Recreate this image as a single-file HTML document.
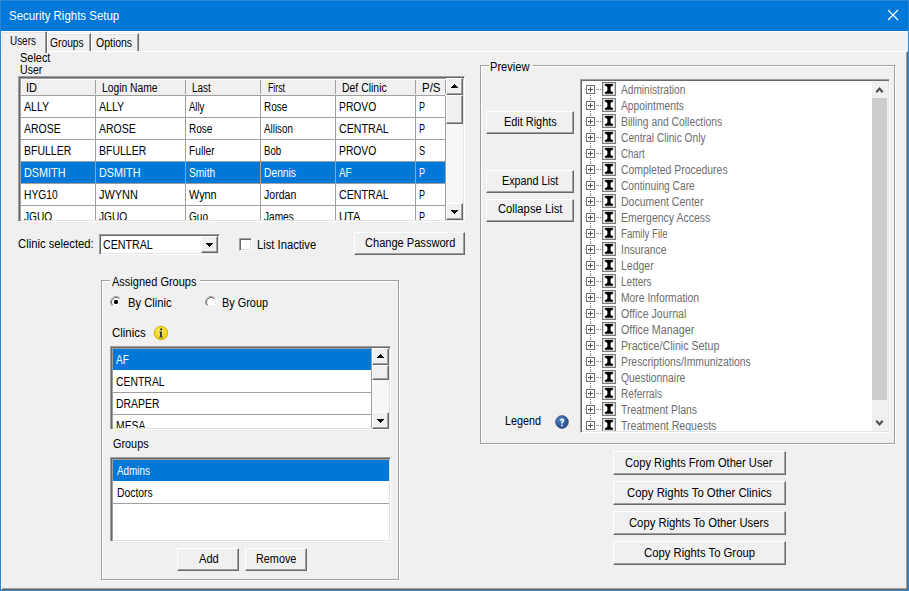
<!DOCTYPE html>
<html><head><meta charset="utf-8">
<style>
*{margin:0;padding:0;box-sizing:border-box}
html,body{width:909px;height:591px;overflow:hidden;background:#f0f0f0;position:relative;font-family:"Liberation Sans",sans-serif}
.a{position:absolute}
.t{position:absolute;font-size:12px;line-height:12px;height:16px;white-space:nowrap;color:#000;transform-origin:0 0}
</style></head><body>
<div class="a" style="left:0px;top:0px;width:909px;height:31px;background:#0078d7;"></div>
<div class="a" style="left:0px;top:0px;width:909px;height:1px;background:#2b87d3;"></div>
<div class="a" style="left:0px;top:0px;width:1px;height:591px;background:#2b87d3;"></div>
<div class="a" style="left:908px;top:0px;width:1px;height:591px;background:#2b87d3;"></div>
<div class="a" style="left:0px;top:590px;width:909px;height:1px;background:#2b87d3;"></div>
<div class="t" style="left:9.20px;top:10px;transform:scaleX(0.9549);color:#fff">Security Rights Setup</div>
<svg class="a" style="left:887px;top:9px" width="12" height="12" viewBox="0 0 12 12" ><path d="M1 1L11 11M11 1L1 11" stroke="#fff" stroke-width="1.2"/></svg>
<div class="a" style="left:1px;top:31px;width:907px;height:1px;background:#fff;"></div>
<div class="a" style="left:1px;top:51px;width:907px;height:539px;border-top:1px solid #fff;border-left:1px solid #fff;border-right:1px solid #696969;border-bottom:1px solid #696969;box-shadow:inset -1px -1px 0 #a0a0a0"></div>
<div class="a" style="left:47px;top:33px;width:44px;height:18px;border-top:1px solid #fff;border-left:1px solid #fff;border-right:1px solid #696969;box-shadow:inset -1px 0 0 #a0a0a0,inset 0 1px 0 #e3e3e3"></div>
<div class="a" style="left:91px;top:33px;width:48px;height:18px;border-top:1px solid #fff;border-left:1px solid #fff;border-right:1px solid #696969;box-shadow:inset -1px 0 0 #a0a0a0,inset 0 1px 0 #e3e3e3"></div>
<div class="a" style="left:1px;top:31px;width:46px;height:22px;background:#f0f0f0;border-top:1px solid #fff;border-left:1px solid #fff;border-right:1px solid #696969;box-shadow:inset -1px 0 0 #a0a0a0,inset 1px 1px 0 #e3e3e3"></div>
<div class="t" style="left:9.50px;top:35px;transform:scaleX(0.8265)">Users</div>
<div class="t" style="left:50.30px;top:37px;transform:scaleX(0.8564)">Groups</div>
<div class="t" style="left:96.30px;top:37px;transform:scaleX(0.8729)">Options</div>
<div class="t" style="left:20.00px;top:52px;transform:scaleX(0.9113)">Select</div>
<div class="t" style="left:20.00px;top:64px;transform:scaleX(0.8800)">User</div>
<div class="a" style="left:18px;top:76px;width:447px;height:146px;background:#fff;border-top:1px solid #a0a0a0;border-left:1px solid #a0a0a0;border-right:1px solid #fff;border-bottom:1px solid #fff;box-shadow:inset 1px 1px 0 #696969,inset 2px 2px 0 #a0a0a0,inset -1px -1px 0 #e3e3e3"></div>
<div class="a" style="left:21px;top:79px;width:424px;height:16px;background:#f0f0f0;"></div>
<div class="a" style="left:21px;top:79px;width:424px;height:1px;background:#fff;"></div>
<div class="a" style="left:21px;top:79px;width:1px;height:16px;background:#fff;"></div>
<div class="a" style="left:21px;top:95px;width:424px;height:1px;background:#a0a0a0;"></div>
<div class="a" style="left:95px;top:80px;width:1px;height:14px;background:#a0a0a0;"></div>
<div class="a" style="left:185px;top:80px;width:1px;height:14px;background:#a0a0a0;"></div>
<div class="a" style="left:260px;top:80px;width:1px;height:14px;background:#a0a0a0;"></div>
<div class="a" style="left:335px;top:80px;width:1px;height:14px;background:#a0a0a0;"></div>
<div class="a" style="left:415px;top:80px;width:1px;height:14px;background:#a0a0a0;"></div>
<div class="a" style="left:445px;top:80px;width:1px;height:14px;background:#a0a0a0;"></div>
<div class="t" style="left:26.18px;top:82px;transform:scaleX(0.9176)">ID</div>
<div class="t" style="left:102.20px;top:82px;transform:scaleX(0.8580)">Login Name</div>
<div class="t" style="left:191.80px;top:82px;transform:scaleX(0.8309)">Last</div>
<div class="t" style="left:267.60px;top:82px;transform:scaleX(0.7294)">First</div>
<div class="t" style="left:342.10px;top:82px;transform:scaleX(0.8706)">Def Clinic</div>
<div class="t" style="left:422.20px;top:82px;transform:scaleX(0.9567)">P/S</div>
<div class="a" style="left:21px;top:162px;width:424px;height:21px;background:#0078d7;"></div>
<div class="a" style="left:21px;top:117px;width:424px;height:1px;background:#a0a0a0;"></div>
<div class="a" style="left:21px;top:139px;width:424px;height:1px;background:#a0a0a0;"></div>
<div class="a" style="left:21px;top:161px;width:424px;height:1px;background:#a0a0a0;"></div>
<div class="a" style="left:21px;top:183px;width:424px;height:1px;background:#a0a0a0;"></div>
<div class="a" style="left:21px;top:205px;width:424px;height:1px;background:#a0a0a0;"></div>
<div class="a" style="left:95px;top:96px;width:1px;height:124px;background:#a0a0a0;"></div>
<div class="a" style="left:185px;top:96px;width:1px;height:124px;background:#a0a0a0;"></div>
<div class="a" style="left:260px;top:96px;width:1px;height:124px;background:#a0a0a0;"></div>
<div class="a" style="left:335px;top:96px;width:1px;height:124px;background:#a0a0a0;"></div>
<div class="a" style="left:415px;top:96px;width:1px;height:124px;background:#a0a0a0;"></div>
<div class="a" style="left:445px;top:96px;width:1px;height:124px;background:#a0a0a0;"></div>
<div class="t" style="left:24.30px;top:101px;transform:scaleX(0.8854)">ALLY</div>
<div class="t" style="left:99.20px;top:101px;transform:scaleX(0.8854)">ALLY</div>
<div class="t" style="left:188.70px;top:101px;transform:scaleX(0.7964)">Ally</div>
<div class="t" style="left:264.30px;top:101px;transform:scaleX(0.8363)">Rose</div>
<div class="t" style="left:339.00px;top:101px;transform:scaleX(0.8603)">PROVO</div>
<div class="t" style="left:419.30px;top:101px;transform:scaleX(0.7500)">P</div>
<div class="t" style="left:24.30px;top:123px;transform:scaleX(0.8713)">AROSE</div>
<div class="t" style="left:99.20px;top:123px;transform:scaleX(0.8713)">AROSE</div>
<div class="t" style="left:188.70px;top:123px;transform:scaleX(0.8363)">Rose</div>
<div class="t" style="left:264.30px;top:123px;transform:scaleX(0.8161)">Allison</div>
<div class="t" style="left:339.00px;top:123px;transform:scaleX(0.8875)">CENTRAL</div>
<div class="t" style="left:419.30px;top:123px;transform:scaleX(0.7500)">P</div>
<div class="t" style="left:24.30px;top:145px;transform:scaleX(0.8739)">BFULLER</div>
<div class="t" style="left:99.20px;top:145px;transform:scaleX(0.8739)">BFULLER</div>
<div class="t" style="left:188.70px;top:145px;transform:scaleX(0.8531)">Fuller</div>
<div class="t" style="left:264.30px;top:145px;transform:scaleX(0.8073)">Bob</div>
<div class="t" style="left:339.00px;top:145px;transform:scaleX(0.8603)">PROVO</div>
<div class="t" style="left:419.30px;top:145px;transform:scaleX(0.7625)">S</div>
<div class="t" style="left:24.30px;top:167px;transform:scaleX(0.9023);color:#fff">DSMITH</div>
<div class="t" style="left:99.20px;top:167px;transform:scaleX(0.9023);color:#fff">DSMITH</div>
<div class="t" style="left:188.70px;top:167px;transform:scaleX(0.8533);color:#fff">Smith</div>
<div class="t" style="left:264.30px;top:167px;transform:scaleX(0.8567);color:#fff">Dennis</div>
<div class="t" style="left:339.00px;top:167px;transform:scaleX(0.8265);color:#fff">AF</div>
<div class="t" style="left:419.30px;top:167px;transform:scaleX(0.7500);color:#fff">P</div>
<div class="t" style="left:24.30px;top:189px;transform:scaleX(0.8569)">HYG10</div>
<div class="t" style="left:99.20px;top:189px;transform:scaleX(0.9096)">JWYNN</div>
<div class="t" style="left:188.70px;top:189px;transform:scaleX(0.9032)">Wynn</div>
<div class="t" style="left:264.30px;top:189px;transform:scaleX(0.8801)">Jordan</div>
<div class="t" style="left:339.00px;top:189px;transform:scaleX(0.8875)">CENTRAL</div>
<div class="t" style="left:419.30px;top:189px;transform:scaleX(0.7500)">P</div>
<div class="t" style="left:24.30px;top:211px;transform:scaleX(0.8485);clip-path:inset(-4px -4px 7px -4px)">JGUO</div>
<div class="t" style="left:99.20px;top:211px;transform:scaleX(0.8485);clip-path:inset(-4px -4px 7px -4px)">JGUO</div>
<div class="t" style="left:188.70px;top:211px;transform:scaleX(0.8388);clip-path:inset(-4px -4px 7px -4px)">Guo</div>
<div class="t" style="left:264.30px;top:211px;transform:scaleX(0.8431);clip-path:inset(-4px -4px 7px -4px)">James</div>
<div class="t" style="left:339.00px;top:211px;transform:scaleX(0.9348);clip-path:inset(-4px -4px 7px -4px)">UTA</div>
<div class="t" style="left:419.30px;top:211px;transform:scaleX(0.7500);clip-path:inset(-4px -4px 7px -4px)">P</div>
<div class="a" style="left:446px;top:78px;width:17px;height:142px;background-color:#f0f0f0;background-image:linear-gradient(45deg,#fff 25%,transparent 25%,transparent 75%,#fff 75%),linear-gradient(45deg,#fff 25%,transparent 25%,transparent 75%,#fff 75%);background-size:2px 2px;background-position:0 0,1px 1px"></div>
<div class="a" style="left:446px;top:78px;width:17px;height:17px;background:#f0f0f0;border-top:1px solid #fff;border-left:1px solid #fff;border-right:1px solid #696969;border-bottom:1px solid #696969;box-shadow:inset -1px -1px 0 #a0a0a0"></div>
<svg class="a" style="left:451px;top:84px" width="7" height="4" viewBox="0 0 7 4" shape-rendering="crispEdges"><path d="M3 0h1v1h1v1h1v1h1v1h-7v-1h1v-1h1v-1h1z" fill="#000"/></svg>
<div class="a" style="left:446px;top:95px;width:17px;height:29px;background:#f0f0f0;border-top:1px solid #fff;border-left:1px solid #fff;border-right:1px solid #696969;border-bottom:1px solid #696969;box-shadow:inset -1px -1px 0 #a0a0a0"></div>
<div class="a" style="left:446px;top:203px;width:17px;height:17px;background:#f0f0f0;border-top:1px solid #fff;border-left:1px solid #fff;border-right:1px solid #696969;border-bottom:1px solid #696969;box-shadow:inset -1px -1px 0 #a0a0a0"></div>
<svg class="a" style="left:451px;top:210px" width="7" height="4" viewBox="0 0 7 4" shape-rendering="crispEdges"><path d="M0 0h7v1h-1v1h-1v1h-1v1h-1v-1h-1v-1h-1v-1h-1z" fill="#000"/></svg>
<div class="t" style="left:17.60px;top:238px;transform:scaleX(0.9382)">Clinic selected:</div>
<div class="a" style="left:99px;top:234px;width:121px;height:21px;background:#fff;border-top:1px solid #a0a0a0;border-left:1px solid #a0a0a0;border-right:1px solid #fff;border-bottom:1px solid #fff;box-shadow:inset 1px 1px 0 #696969,inset -1px -1px 0 #e3e3e3"></div>
<div class="t" style="left:102.60px;top:239px;transform:scaleX(0.8893)">CENTRAL</div>
<div class="a" style="left:201px;top:236px;width:17px;height:17px;background:#f0f0f0;border-top:1px solid #fff;border-left:1px solid #fff;border-right:1px solid #696969;border-bottom:1px solid #696969;box-shadow:inset -1px -1px 0 #a0a0a0"></div>
<svg class="a" style="left:206px;top:243px" width="7" height="4" viewBox="0 0 7 4" shape-rendering="crispEdges"><path d="M0 0h7v1h-1v1h-1v1h-1v1h-1v-1h-1v-1h-1v-1h-1z" fill="#000"/></svg>
<div class="a" style="left:239px;top:238px;width:13px;height:13px;background:#fff;border-top:1px solid #a0a0a0;border-left:1px solid #a0a0a0;border-right:1px solid #fff;border-bottom:1px solid #fff;box-shadow:inset 1px 1px 0 #696969,inset -1px -1px 0 #e3e3e3"></div>
<div class="t" style="left:257.40px;top:239px;transform:scaleX(0.9342)">List Inactive</div>
<div class="a" style="left:354px;top:232px;width:111px;height:23px;background:#f0f0f0;border-top:1px solid #fff;border-left:1px solid #fff;border-right:1px solid #696969;border-bottom:1px solid #696969;box-shadow:inset -1px -1px 0 #a0a0a0"></div>
<div class="t" style="left:365.20px;top:237px;transform:scaleX(0.9221)">Change Password</div>
<div class="a" style="left:102px;top:281px;width:298px;height:300px;border:1px solid #fff"></div>
<div class="a" style="left:101px;top:280px;width:298px;height:300px;border:1px solid #a0a0a0"></div>
<div class="a" style="left:110px;top:272px;width:90px;height:14px;background:#f0f0f0;"></div>
<div class="t" style="left:111.50px;top:276px;transform:scaleX(0.9180)">Assigned Groups</div>
<svg class="a" style="left:110px;top:296px" width="12" height="12" viewBox="0 0 12 12" ><circle cx="6" cy="6" r="5.5" fill="#fff"/><path d="M2.11 9.89A5.5 5.5 0 0 1 9.89 2.11" stroke="#a0a0a0" stroke-width="1" fill="none"/><path d="M2.82 9.18A4.5 4.5 0 0 1 9.18 2.82" stroke="#696969" stroke-width="1" fill="none"/><path d="M9.18 2.82A4.5 4.5 0 0 1 2.82 9.18" stroke="#e3e3e3" stroke-width="1" fill="none"/><rect x="4" y="4" width="4" height="4" rx="1.4" fill="#000"/></svg>
<div class="t" style="left:127.70px;top:297px;transform:scaleX(0.9341)">By Clinic</div>
<svg class="a" style="left:205px;top:296px" width="12" height="12" viewBox="0 0 12 12" ><circle cx="6" cy="6" r="5.5" fill="#fff"/><path d="M2.11 9.89A5.5 5.5 0 0 1 9.89 2.11" stroke="#a0a0a0" stroke-width="1" fill="none"/><path d="M2.82 9.18A4.5 4.5 0 0 1 9.18 2.82" stroke="#696969" stroke-width="1" fill="none"/><path d="M9.18 2.82A4.5 4.5 0 0 1 2.82 9.18" stroke="#e3e3e3" stroke-width="1" fill="none"/></svg>
<div class="t" style="left:222.40px;top:297px;transform:scaleX(0.9076)">By Group</div>
<div class="t" style="left:112.30px;top:327px;transform:scaleX(0.9537)">Clinics</div>
<svg class="a" style="left:153px;top:325px" width="16" height="16" viewBox="0 0 16 16" ><defs><radialGradient id="yg" cx="0.4" cy="0.35" r="0.7"><stop offset="0" stop-color="#fbe866"/><stop offset="1" stop-color="#f0d000"/></radialGradient></defs><circle cx="8" cy="8" r="6.7" fill="url(#yg)" stroke="#caa800" stroke-width="0.9"/><circle cx="8.2" cy="4.4" r="1.15" fill="#34344a"/><path d="M6.3 6.4H8.9V11.7H10V12.6H5.9V11.7H7V7.2H6.3Z" fill="#34344a"/></svg>
<div class="a" style="left:110px;top:346px;width:281px;height:84px;background:#fff;border-top:1px solid #a0a0a0;border-left:1px solid #a0a0a0;border-right:1px solid #fff;border-bottom:1px solid #fff;box-shadow:inset 1px 1px 0 #696969,inset 2px 2px 0 #a0a0a0,inset -1px -1px 0 #e3e3e3"></div>
<div class="a" style="left:113px;top:349px;width:258px;height:21px;background:#0078d7;"></div>
<div class="a" style="left:113px;top:392px;width:258px;height:1px;background:#a0a0a0;"></div>
<div class="a" style="left:113px;top:414px;width:258px;height:1px;background:#a0a0a0;"></div>
<div class="a" style="left:371px;top:349px;width:1px;height:79px;background:#a0a0a0;"></div>
<div class="t" style="left:116.30px;top:354px;transform:scaleX(0.8398);color:#fff">AF</div>
<div class="t" style="left:115.90px;top:376px;transform:scaleX(0.8680)">CENTRAL</div>
<div class="t" style="left:116.30px;top:398px;transform:scaleX(0.8680)">DRAPER</div>
<div class="t" style="left:116.30px;top:420px;transform:scaleX(0.8646);clip-path:inset(-4px -4px 8px -4px)">MESA</div>
<div class="a" style="left:372px;top:348px;width:17px;height:80px;background-color:#f0f0f0;background-image:linear-gradient(45deg,#fff 25%,transparent 25%,transparent 75%,#fff 75%),linear-gradient(45deg,#fff 25%,transparent 25%,transparent 75%,#fff 75%);background-size:2px 2px;background-position:0 0,1px 1px"></div>
<div class="a" style="left:372px;top:348px;width:17px;height:17px;background:#f0f0f0;border-top:1px solid #fff;border-left:1px solid #fff;border-right:1px solid #696969;border-bottom:1px solid #696969;box-shadow:inset -1px -1px 0 #a0a0a0"></div>
<svg class="a" style="left:377px;top:354px" width="7" height="4" viewBox="0 0 7 4" shape-rendering="crispEdges"><path d="M3 0h1v1h1v1h1v1h1v1h-7v-1h1v-1h1v-1h1z" fill="#000"/></svg>
<div class="a" style="left:372px;top:365px;width:17px;height:15px;background:#f0f0f0;border-top:1px solid #fff;border-left:1px solid #fff;border-right:1px solid #696969;border-bottom:1px solid #696969;box-shadow:inset -1px -1px 0 #a0a0a0"></div>
<div class="a" style="left:372px;top:412px;width:17px;height:17px;background:#f0f0f0;border-top:1px solid #fff;border-left:1px solid #fff;border-right:1px solid #696969;border-bottom:1px solid #696969;box-shadow:inset -1px -1px 0 #a0a0a0"></div>
<svg class="a" style="left:377px;top:419px" width="7" height="4" viewBox="0 0 7 4" shape-rendering="crispEdges"><path d="M0 0h7v1h-1v1h-1v1h-1v1h-1v-1h-1v-1h-1v-1h-1z" fill="#000"/></svg>
<div class="t" style="left:112.60px;top:438px;transform:scaleX(0.9047)">Groups</div>
<div class="a" style="left:110px;top:457px;width:281px;height:85px;background:#fff;border-top:1px solid #a0a0a0;border-left:1px solid #a0a0a0;border-right:1px solid #fff;border-bottom:1px solid #fff;box-shadow:inset 1px 1px 0 #696969,inset 2px 2px 0 #a0a0a0,inset -1px -1px 0 #e3e3e3"></div>
<div class="a" style="left:113px;top:460px;width:276px;height:21px;background:#0078d7;"></div>
<div class="a" style="left:113px;top:503px;width:276px;height:1px;background:#a0a0a0;"></div>
<div class="t" style="left:116.60px;top:465px;transform:scaleX(0.8247);color:#fff">Admins</div>
<div class="t" style="left:116.60px;top:487px;transform:scaleX(0.8611)">Doctors</div>
<div class="a" style="left:177px;top:548px;width:62px;height:23px;background:#f0f0f0;border-top:1px solid #fff;border-left:1px solid #fff;border-right:1px solid #696969;border-bottom:1px solid #696969;box-shadow:inset -1px -1px 0 #a0a0a0"></div>
<div class="t" style="left:199.00px;top:553px;transform:scaleX(0.9237)">Add</div>
<div class="a" style="left:245px;top:548px;width:62px;height:23px;background:#f0f0f0;border-top:1px solid #fff;border-left:1px solid #fff;border-right:1px solid #696969;border-bottom:1px solid #696969;box-shadow:inset -1px -1px 0 #a0a0a0"></div>
<div class="t" style="left:256.40px;top:553px;transform:scaleX(0.9042)">Remove</div>
<div class="a" style="left:481px;top:66px;width:415px;height:379px;border:1px solid #fff"></div>
<div class="a" style="left:480px;top:65px;width:415px;height:379px;border:1px solid #a0a0a0"></div>
<div class="a" style="left:489px;top:58px;width:44px;height:14px;background:#f0f0f0;"></div>
<div class="t" style="left:490.20px;top:61px;transform:scaleX(0.9230)">Preview</div>
<div class="a" style="left:486px;top:111px;width:88px;height:23px;background:#f0f0f0;border-top:1px solid #fff;border-left:1px solid #fff;border-right:1px solid #696969;border-bottom:1px solid #696969;box-shadow:inset -1px -1px 0 #a0a0a0"></div>
<div class="t" style="left:503.60px;top:116px;transform:scaleX(0.9082)">Edit Rights</div>
<div class="a" style="left:486px;top:170px;width:88px;height:23px;background:#f0f0f0;border-top:1px solid #fff;border-left:1px solid #fff;border-right:1px solid #696969;border-bottom:1px solid #696969;box-shadow:inset -1px -1px 0 #a0a0a0"></div>
<div class="t" style="left:502.00px;top:175px;transform:scaleX(0.8979)">Expand List</div>
<div class="a" style="left:486px;top:199px;width:88px;height:23px;background:#f0f0f0;border-top:1px solid #fff;border-left:1px solid #fff;border-right:1px solid #696969;border-bottom:1px solid #696969;box-shadow:inset -1px -1px 0 #a0a0a0"></div>
<div class="t" style="left:498.40px;top:203px;transform:scaleX(0.9370)">Collapse List</div>
<div class="t" style="left:504.50px;top:415px;transform:scaleX(0.9017)">Legend</div>
<svg class="a" style="left:555px;top:415px" width="14" height="14" viewBox="0 0 14 14" ><defs><radialGradient id="bg1" cx="0.38" cy="0.32" r="0.75"><stop offset="0" stop-color="#5b86c8"/><stop offset="0.6" stop-color="#2f5ca6"/><stop offset="1" stop-color="#21468a"/></radialGradient></defs><circle cx="7" cy="7" r="6.4" fill="url(#bg1)" stroke="#3b4660" stroke-width="0.6"/><path d="M4.9 5.6Q4.9 3.6 7.1 3.6Q9.4 3.6 9.4 5.4Q9.4 6.4 8.3 7Q7.9 7.3 7.9 7.9V8.6H6.2V7.7Q6.2 6.7 7.2 6.1Q7.7 5.8 7.7 5.4Q7.7 4.9 7.1 4.9Q6.5 4.9 6.5 5.8Z" fill="#fff"/><rect x="6.2" y="9.7" width="1.7" height="1.5" fill="#fff"/></svg>
<div class="a" style="left:580px;top:79px;width:310px;height:354px;background:#fff;border-top:1px solid #a0a0a0;border-left:1px solid #a0a0a0;border-right:1px solid #fff;border-bottom:1px solid #fff;box-shadow:inset 1px 1px 0 #696969,inset -1px -1px 0 #e3e3e3"></div>
<div class="a" style="left:872px;top:81px;width:16px;height:350px;background:#f0f0f0;"></div>
<div class="a" style="left:872px;top:98px;width:15px;height:302px;background:#cdcdcd;"></div>
<svg class="a" style="left:875px;top:86px" width="10" height="8" viewBox="0 0 10 8" ><path d="M1.3 6.3L4.5 2.6L7.7 6.3" stroke="#505050" stroke-width="2.2" fill="none"/></svg>
<svg class="a" style="left:875px;top:419px" width="10" height="8" viewBox="0 0 10 8" ><path d="M1.3 1.7L4.5 5.4L7.7 1.7" stroke="#505050" stroke-width="2.2" fill="none"/></svg>
<svg class="a" style="left:582px;top:82px" width="290" height="349" viewBox="0 0 290 349" shape-rendering="crispEdges"><rect x="4.5" y="3.5" width="8" height="8" fill="#fff" stroke="#707070"/><rect x="6" y="7" width="5" height="1" fill="#505050"/><rect x="8" y="5" width="1" height="5" fill="#505050"/><rect x="14" y="7" width="1" height="1" fill="#808080"/><rect x="16" y="7" width="1" height="1" fill="#808080"/><rect x="18" y="7" width="1" height="1" fill="#808080"/><rect x="8" y="13" width="1" height="1" fill="#808080"/><rect x="8" y="15" width="1" height="1" fill="#808080"/><rect x="8" y="17" width="1" height="1" fill="#808080"/><rect x="20.5" y="0.5" width="13" height="13" fill="#fff" stroke="#7a7a7a"/><rect x="21.5" y="1.5" width="11" height="11" fill="none" stroke="#d8d8d8"/><rect x="4.5" y="19.5" width="8" height="8" fill="#fff" stroke="#707070"/><rect x="6" y="23" width="5" height="1" fill="#505050"/><rect x="8" y="21" width="1" height="5" fill="#505050"/><rect x="14" y="23" width="1" height="1" fill="#808080"/><rect x="16" y="23" width="1" height="1" fill="#808080"/><rect x="18" y="23" width="1" height="1" fill="#808080"/><rect x="8" y="29" width="1" height="1" fill="#808080"/><rect x="8" y="31" width="1" height="1" fill="#808080"/><rect x="8" y="33" width="1" height="1" fill="#808080"/><rect x="20.5" y="16.5" width="13" height="13" fill="#fff" stroke="#7a7a7a"/><rect x="21.5" y="17.5" width="11" height="11" fill="none" stroke="#d8d8d8"/><rect x="4.5" y="35.5" width="8" height="8" fill="#fff" stroke="#707070"/><rect x="6" y="39" width="5" height="1" fill="#505050"/><rect x="8" y="37" width="1" height="5" fill="#505050"/><rect x="14" y="39" width="1" height="1" fill="#808080"/><rect x="16" y="39" width="1" height="1" fill="#808080"/><rect x="18" y="39" width="1" height="1" fill="#808080"/><rect x="8" y="45" width="1" height="1" fill="#808080"/><rect x="8" y="47" width="1" height="1" fill="#808080"/><rect x="8" y="49" width="1" height="1" fill="#808080"/><rect x="20.5" y="32.5" width="13" height="13" fill="#fff" stroke="#7a7a7a"/><rect x="21.5" y="33.5" width="11" height="11" fill="none" stroke="#d8d8d8"/><rect x="4.5" y="51.5" width="8" height="8" fill="#fff" stroke="#707070"/><rect x="6" y="55" width="5" height="1" fill="#505050"/><rect x="8" y="53" width="1" height="5" fill="#505050"/><rect x="14" y="55" width="1" height="1" fill="#808080"/><rect x="16" y="55" width="1" height="1" fill="#808080"/><rect x="18" y="55" width="1" height="1" fill="#808080"/><rect x="8" y="61" width="1" height="1" fill="#808080"/><rect x="8" y="63" width="1" height="1" fill="#808080"/><rect x="8" y="65" width="1" height="1" fill="#808080"/><rect x="20.5" y="48.5" width="13" height="13" fill="#fff" stroke="#7a7a7a"/><rect x="21.5" y="49.5" width="11" height="11" fill="none" stroke="#d8d8d8"/><rect x="4.5" y="67.5" width="8" height="8" fill="#fff" stroke="#707070"/><rect x="6" y="71" width="5" height="1" fill="#505050"/><rect x="8" y="69" width="1" height="5" fill="#505050"/><rect x="14" y="71" width="1" height="1" fill="#808080"/><rect x="16" y="71" width="1" height="1" fill="#808080"/><rect x="18" y="71" width="1" height="1" fill="#808080"/><rect x="8" y="77" width="1" height="1" fill="#808080"/><rect x="8" y="79" width="1" height="1" fill="#808080"/><rect x="8" y="81" width="1" height="1" fill="#808080"/><rect x="20.5" y="64.5" width="13" height="13" fill="#fff" stroke="#7a7a7a"/><rect x="21.5" y="65.5" width="11" height="11" fill="none" stroke="#d8d8d8"/><rect x="4.5" y="83.5" width="8" height="8" fill="#fff" stroke="#707070"/><rect x="6" y="87" width="5" height="1" fill="#505050"/><rect x="8" y="85" width="1" height="5" fill="#505050"/><rect x="14" y="87" width="1" height="1" fill="#808080"/><rect x="16" y="87" width="1" height="1" fill="#808080"/><rect x="18" y="87" width="1" height="1" fill="#808080"/><rect x="8" y="93" width="1" height="1" fill="#808080"/><rect x="8" y="95" width="1" height="1" fill="#808080"/><rect x="8" y="97" width="1" height="1" fill="#808080"/><rect x="20.5" y="80.5" width="13" height="13" fill="#fff" stroke="#7a7a7a"/><rect x="21.5" y="81.5" width="11" height="11" fill="none" stroke="#d8d8d8"/><rect x="4.5" y="99.5" width="8" height="8" fill="#fff" stroke="#707070"/><rect x="6" y="103" width="5" height="1" fill="#505050"/><rect x="8" y="101" width="1" height="5" fill="#505050"/><rect x="14" y="103" width="1" height="1" fill="#808080"/><rect x="16" y="103" width="1" height="1" fill="#808080"/><rect x="18" y="103" width="1" height="1" fill="#808080"/><rect x="8" y="109" width="1" height="1" fill="#808080"/><rect x="8" y="111" width="1" height="1" fill="#808080"/><rect x="8" y="113" width="1" height="1" fill="#808080"/><rect x="20.5" y="96.5" width="13" height="13" fill="#fff" stroke="#7a7a7a"/><rect x="21.5" y="97.5" width="11" height="11" fill="none" stroke="#d8d8d8"/><rect x="4.5" y="115.5" width="8" height="8" fill="#fff" stroke="#707070"/><rect x="6" y="119" width="5" height="1" fill="#505050"/><rect x="8" y="117" width="1" height="5" fill="#505050"/><rect x="14" y="119" width="1" height="1" fill="#808080"/><rect x="16" y="119" width="1" height="1" fill="#808080"/><rect x="18" y="119" width="1" height="1" fill="#808080"/><rect x="8" y="125" width="1" height="1" fill="#808080"/><rect x="8" y="127" width="1" height="1" fill="#808080"/><rect x="8" y="129" width="1" height="1" fill="#808080"/><rect x="20.5" y="112.5" width="13" height="13" fill="#fff" stroke="#7a7a7a"/><rect x="21.5" y="113.5" width="11" height="11" fill="none" stroke="#d8d8d8"/><rect x="4.5" y="131.5" width="8" height="8" fill="#fff" stroke="#707070"/><rect x="6" y="135" width="5" height="1" fill="#505050"/><rect x="8" y="133" width="1" height="5" fill="#505050"/><rect x="14" y="135" width="1" height="1" fill="#808080"/><rect x="16" y="135" width="1" height="1" fill="#808080"/><rect x="18" y="135" width="1" height="1" fill="#808080"/><rect x="8" y="141" width="1" height="1" fill="#808080"/><rect x="8" y="143" width="1" height="1" fill="#808080"/><rect x="8" y="145" width="1" height="1" fill="#808080"/><rect x="20.5" y="128.5" width="13" height="13" fill="#fff" stroke="#7a7a7a"/><rect x="21.5" y="129.5" width="11" height="11" fill="none" stroke="#d8d8d8"/><rect x="4.5" y="147.5" width="8" height="8" fill="#fff" stroke="#707070"/><rect x="6" y="151" width="5" height="1" fill="#505050"/><rect x="8" y="149" width="1" height="5" fill="#505050"/><rect x="14" y="151" width="1" height="1" fill="#808080"/><rect x="16" y="151" width="1" height="1" fill="#808080"/><rect x="18" y="151" width="1" height="1" fill="#808080"/><rect x="8" y="157" width="1" height="1" fill="#808080"/><rect x="8" y="159" width="1" height="1" fill="#808080"/><rect x="8" y="161" width="1" height="1" fill="#808080"/><rect x="20.5" y="144.5" width="13" height="13" fill="#fff" stroke="#7a7a7a"/><rect x="21.5" y="145.5" width="11" height="11" fill="none" stroke="#d8d8d8"/><rect x="4.5" y="163.5" width="8" height="8" fill="#fff" stroke="#707070"/><rect x="6" y="167" width="5" height="1" fill="#505050"/><rect x="8" y="165" width="1" height="5" fill="#505050"/><rect x="14" y="167" width="1" height="1" fill="#808080"/><rect x="16" y="167" width="1" height="1" fill="#808080"/><rect x="18" y="167" width="1" height="1" fill="#808080"/><rect x="8" y="173" width="1" height="1" fill="#808080"/><rect x="8" y="175" width="1" height="1" fill="#808080"/><rect x="8" y="177" width="1" height="1" fill="#808080"/><rect x="20.5" y="160.5" width="13" height="13" fill="#fff" stroke="#7a7a7a"/><rect x="21.5" y="161.5" width="11" height="11" fill="none" stroke="#d8d8d8"/><rect x="4.5" y="179.5" width="8" height="8" fill="#fff" stroke="#707070"/><rect x="6" y="183" width="5" height="1" fill="#505050"/><rect x="8" y="181" width="1" height="5" fill="#505050"/><rect x="14" y="183" width="1" height="1" fill="#808080"/><rect x="16" y="183" width="1" height="1" fill="#808080"/><rect x="18" y="183" width="1" height="1" fill="#808080"/><rect x="8" y="189" width="1" height="1" fill="#808080"/><rect x="8" y="191" width="1" height="1" fill="#808080"/><rect x="8" y="193" width="1" height="1" fill="#808080"/><rect x="20.5" y="176.5" width="13" height="13" fill="#fff" stroke="#7a7a7a"/><rect x="21.5" y="177.5" width="11" height="11" fill="none" stroke="#d8d8d8"/><rect x="4.5" y="195.5" width="8" height="8" fill="#fff" stroke="#707070"/><rect x="6" y="199" width="5" height="1" fill="#505050"/><rect x="8" y="197" width="1" height="5" fill="#505050"/><rect x="14" y="199" width="1" height="1" fill="#808080"/><rect x="16" y="199" width="1" height="1" fill="#808080"/><rect x="18" y="199" width="1" height="1" fill="#808080"/><rect x="8" y="205" width="1" height="1" fill="#808080"/><rect x="8" y="207" width="1" height="1" fill="#808080"/><rect x="8" y="209" width="1" height="1" fill="#808080"/><rect x="20.5" y="192.5" width="13" height="13" fill="#fff" stroke="#7a7a7a"/><rect x="21.5" y="193.5" width="11" height="11" fill="none" stroke="#d8d8d8"/><rect x="4.5" y="211.5" width="8" height="8" fill="#fff" stroke="#707070"/><rect x="6" y="215" width="5" height="1" fill="#505050"/><rect x="8" y="213" width="1" height="5" fill="#505050"/><rect x="14" y="215" width="1" height="1" fill="#808080"/><rect x="16" y="215" width="1" height="1" fill="#808080"/><rect x="18" y="215" width="1" height="1" fill="#808080"/><rect x="8" y="221" width="1" height="1" fill="#808080"/><rect x="8" y="223" width="1" height="1" fill="#808080"/><rect x="8" y="225" width="1" height="1" fill="#808080"/><rect x="20.5" y="208.5" width="13" height="13" fill="#fff" stroke="#7a7a7a"/><rect x="21.5" y="209.5" width="11" height="11" fill="none" stroke="#d8d8d8"/><rect x="4.5" y="227.5" width="8" height="8" fill="#fff" stroke="#707070"/><rect x="6" y="231" width="5" height="1" fill="#505050"/><rect x="8" y="229" width="1" height="5" fill="#505050"/><rect x="14" y="231" width="1" height="1" fill="#808080"/><rect x="16" y="231" width="1" height="1" fill="#808080"/><rect x="18" y="231" width="1" height="1" fill="#808080"/><rect x="8" y="237" width="1" height="1" fill="#808080"/><rect x="8" y="239" width="1" height="1" fill="#808080"/><rect x="8" y="241" width="1" height="1" fill="#808080"/><rect x="20.5" y="224.5" width="13" height="13" fill="#fff" stroke="#7a7a7a"/><rect x="21.5" y="225.5" width="11" height="11" fill="none" stroke="#d8d8d8"/><rect x="4.5" y="243.5" width="8" height="8" fill="#fff" stroke="#707070"/><rect x="6" y="247" width="5" height="1" fill="#505050"/><rect x="8" y="245" width="1" height="5" fill="#505050"/><rect x="14" y="247" width="1" height="1" fill="#808080"/><rect x="16" y="247" width="1" height="1" fill="#808080"/><rect x="18" y="247" width="1" height="1" fill="#808080"/><rect x="8" y="253" width="1" height="1" fill="#808080"/><rect x="8" y="255" width="1" height="1" fill="#808080"/><rect x="8" y="257" width="1" height="1" fill="#808080"/><rect x="20.5" y="240.5" width="13" height="13" fill="#fff" stroke="#7a7a7a"/><rect x="21.5" y="241.5" width="11" height="11" fill="none" stroke="#d8d8d8"/><rect x="4.5" y="259.5" width="8" height="8" fill="#fff" stroke="#707070"/><rect x="6" y="263" width="5" height="1" fill="#505050"/><rect x="8" y="261" width="1" height="5" fill="#505050"/><rect x="14" y="263" width="1" height="1" fill="#808080"/><rect x="16" y="263" width="1" height="1" fill="#808080"/><rect x="18" y="263" width="1" height="1" fill="#808080"/><rect x="8" y="269" width="1" height="1" fill="#808080"/><rect x="8" y="271" width="1" height="1" fill="#808080"/><rect x="8" y="273" width="1" height="1" fill="#808080"/><rect x="20.5" y="256.5" width="13" height="13" fill="#fff" stroke="#7a7a7a"/><rect x="21.5" y="257.5" width="11" height="11" fill="none" stroke="#d8d8d8"/><rect x="4.5" y="275.5" width="8" height="8" fill="#fff" stroke="#707070"/><rect x="6" y="279" width="5" height="1" fill="#505050"/><rect x="8" y="277" width="1" height="5" fill="#505050"/><rect x="14" y="279" width="1" height="1" fill="#808080"/><rect x="16" y="279" width="1" height="1" fill="#808080"/><rect x="18" y="279" width="1" height="1" fill="#808080"/><rect x="8" y="285" width="1" height="1" fill="#808080"/><rect x="8" y="287" width="1" height="1" fill="#808080"/><rect x="8" y="289" width="1" height="1" fill="#808080"/><rect x="20.5" y="272.5" width="13" height="13" fill="#fff" stroke="#7a7a7a"/><rect x="21.5" y="273.5" width="11" height="11" fill="none" stroke="#d8d8d8"/><rect x="4.5" y="291.5" width="8" height="8" fill="#fff" stroke="#707070"/><rect x="6" y="295" width="5" height="1" fill="#505050"/><rect x="8" y="293" width="1" height="5" fill="#505050"/><rect x="14" y="295" width="1" height="1" fill="#808080"/><rect x="16" y="295" width="1" height="1" fill="#808080"/><rect x="18" y="295" width="1" height="1" fill="#808080"/><rect x="8" y="301" width="1" height="1" fill="#808080"/><rect x="8" y="303" width="1" height="1" fill="#808080"/><rect x="8" y="305" width="1" height="1" fill="#808080"/><rect x="20.5" y="288.5" width="13" height="13" fill="#fff" stroke="#7a7a7a"/><rect x="21.5" y="289.5" width="11" height="11" fill="none" stroke="#d8d8d8"/><rect x="4.5" y="307.5" width="8" height="8" fill="#fff" stroke="#707070"/><rect x="6" y="311" width="5" height="1" fill="#505050"/><rect x="8" y="309" width="1" height="5" fill="#505050"/><rect x="14" y="311" width="1" height="1" fill="#808080"/><rect x="16" y="311" width="1" height="1" fill="#808080"/><rect x="18" y="311" width="1" height="1" fill="#808080"/><rect x="8" y="317" width="1" height="1" fill="#808080"/><rect x="8" y="319" width="1" height="1" fill="#808080"/><rect x="8" y="321" width="1" height="1" fill="#808080"/><rect x="20.5" y="304.5" width="13" height="13" fill="#fff" stroke="#7a7a7a"/><rect x="21.5" y="305.5" width="11" height="11" fill="none" stroke="#d8d8d8"/><rect x="4.5" y="323.5" width="8" height="8" fill="#fff" stroke="#707070"/><rect x="6" y="327" width="5" height="1" fill="#505050"/><rect x="8" y="325" width="1" height="5" fill="#505050"/><rect x="14" y="327" width="1" height="1" fill="#808080"/><rect x="16" y="327" width="1" height="1" fill="#808080"/><rect x="18" y="327" width="1" height="1" fill="#808080"/><rect x="8" y="333" width="1" height="1" fill="#808080"/><rect x="8" y="335" width="1" height="1" fill="#808080"/><rect x="8" y="337" width="1" height="1" fill="#808080"/><rect x="20.5" y="320.5" width="13" height="13" fill="#fff" stroke="#7a7a7a"/><rect x="21.5" y="321.5" width="11" height="11" fill="none" stroke="#d8d8d8"/><rect x="4.5" y="339.5" width="8" height="8" fill="#fff" stroke="#707070"/><rect x="6" y="343" width="5" height="1" fill="#505050"/><rect x="8" y="341" width="1" height="5" fill="#505050"/><rect x="14" y="343" width="1" height="1" fill="#808080"/><rect x="16" y="343" width="1" height="1" fill="#808080"/><rect x="18" y="343" width="1" height="1" fill="#808080"/><rect x="20.5" y="336.5" width="13" height="13" fill="#fff" stroke="#7a7a7a"/><rect x="21.5" y="337.5" width="11" height="11" fill="none" stroke="#d8d8d8"/><path transform="translate(20 0)" d="M3.1 2.1H10.9V3.8Q8.6 3.8 8.5 5.7V8.1Q8.6 10 10.9 10V11.8H3.1V10Q5.4 10 5.5 8.1V5.7Q5.4 3.8 3.1 3.8Z" fill="#000" stroke="#000" stroke-width="0.2" stroke-linejoin="round" shape-rendering="auto"/><path transform="translate(20 16)" d="M3.1 2.1H10.9V3.8Q8.6 3.8 8.5 5.7V8.1Q8.6 10 10.9 10V11.8H3.1V10Q5.4 10 5.5 8.1V5.7Q5.4 3.8 3.1 3.8Z" fill="#000" stroke="#000" stroke-width="0.2" stroke-linejoin="round" shape-rendering="auto"/><path transform="translate(20 32)" d="M3.1 2.1H10.9V3.8Q8.6 3.8 8.5 5.7V8.1Q8.6 10 10.9 10V11.8H3.1V10Q5.4 10 5.5 8.1V5.7Q5.4 3.8 3.1 3.8Z" fill="#000" stroke="#000" stroke-width="0.2" stroke-linejoin="round" shape-rendering="auto"/><path transform="translate(20 48)" d="M3.1 2.1H10.9V3.8Q8.6 3.8 8.5 5.7V8.1Q8.6 10 10.9 10V11.8H3.1V10Q5.4 10 5.5 8.1V5.7Q5.4 3.8 3.1 3.8Z" fill="#000" stroke="#000" stroke-width="0.2" stroke-linejoin="round" shape-rendering="auto"/><path transform="translate(20 64)" d="M3.1 2.1H10.9V3.8Q8.6 3.8 8.5 5.7V8.1Q8.6 10 10.9 10V11.8H3.1V10Q5.4 10 5.5 8.1V5.7Q5.4 3.8 3.1 3.8Z" fill="#000" stroke="#000" stroke-width="0.2" stroke-linejoin="round" shape-rendering="auto"/><path transform="translate(20 80)" d="M3.1 2.1H10.9V3.8Q8.6 3.8 8.5 5.7V8.1Q8.6 10 10.9 10V11.8H3.1V10Q5.4 10 5.5 8.1V5.7Q5.4 3.8 3.1 3.8Z" fill="#000" stroke="#000" stroke-width="0.2" stroke-linejoin="round" shape-rendering="auto"/><path transform="translate(20 96)" d="M3.1 2.1H10.9V3.8Q8.6 3.8 8.5 5.7V8.1Q8.6 10 10.9 10V11.8H3.1V10Q5.4 10 5.5 8.1V5.7Q5.4 3.8 3.1 3.8Z" fill="#000" stroke="#000" stroke-width="0.2" stroke-linejoin="round" shape-rendering="auto"/><path transform="translate(20 112)" d="M3.1 2.1H10.9V3.8Q8.6 3.8 8.5 5.7V8.1Q8.6 10 10.9 10V11.8H3.1V10Q5.4 10 5.5 8.1V5.7Q5.4 3.8 3.1 3.8Z" fill="#000" stroke="#000" stroke-width="0.2" stroke-linejoin="round" shape-rendering="auto"/><path transform="translate(20 128)" d="M3.1 2.1H10.9V3.8Q8.6 3.8 8.5 5.7V8.1Q8.6 10 10.9 10V11.8H3.1V10Q5.4 10 5.5 8.1V5.7Q5.4 3.8 3.1 3.8Z" fill="#000" stroke="#000" stroke-width="0.2" stroke-linejoin="round" shape-rendering="auto"/><path transform="translate(20 144)" d="M3.1 2.1H10.9V3.8Q8.6 3.8 8.5 5.7V8.1Q8.6 10 10.9 10V11.8H3.1V10Q5.4 10 5.5 8.1V5.7Q5.4 3.8 3.1 3.8Z" fill="#000" stroke="#000" stroke-width="0.2" stroke-linejoin="round" shape-rendering="auto"/><path transform="translate(20 160)" d="M3.1 2.1H10.9V3.8Q8.6 3.8 8.5 5.7V8.1Q8.6 10 10.9 10V11.8H3.1V10Q5.4 10 5.5 8.1V5.7Q5.4 3.8 3.1 3.8Z" fill="#000" stroke="#000" stroke-width="0.2" stroke-linejoin="round" shape-rendering="auto"/><path transform="translate(20 176)" d="M3.1 2.1H10.9V3.8Q8.6 3.8 8.5 5.7V8.1Q8.6 10 10.9 10V11.8H3.1V10Q5.4 10 5.5 8.1V5.7Q5.4 3.8 3.1 3.8Z" fill="#000" stroke="#000" stroke-width="0.2" stroke-linejoin="round" shape-rendering="auto"/><path transform="translate(20 192)" d="M3.1 2.1H10.9V3.8Q8.6 3.8 8.5 5.7V8.1Q8.6 10 10.9 10V11.8H3.1V10Q5.4 10 5.5 8.1V5.7Q5.4 3.8 3.1 3.8Z" fill="#000" stroke="#000" stroke-width="0.2" stroke-linejoin="round" shape-rendering="auto"/><path transform="translate(20 208)" d="M3.1 2.1H10.9V3.8Q8.6 3.8 8.5 5.7V8.1Q8.6 10 10.9 10V11.8H3.1V10Q5.4 10 5.5 8.1V5.7Q5.4 3.8 3.1 3.8Z" fill="#000" stroke="#000" stroke-width="0.2" stroke-linejoin="round" shape-rendering="auto"/><path transform="translate(20 224)" d="M3.1 2.1H10.9V3.8Q8.6 3.8 8.5 5.7V8.1Q8.6 10 10.9 10V11.8H3.1V10Q5.4 10 5.5 8.1V5.7Q5.4 3.8 3.1 3.8Z" fill="#000" stroke="#000" stroke-width="0.2" stroke-linejoin="round" shape-rendering="auto"/><path transform="translate(20 240)" d="M3.1 2.1H10.9V3.8Q8.6 3.8 8.5 5.7V8.1Q8.6 10 10.9 10V11.8H3.1V10Q5.4 10 5.5 8.1V5.7Q5.4 3.8 3.1 3.8Z" fill="#000" stroke="#000" stroke-width="0.2" stroke-linejoin="round" shape-rendering="auto"/><path transform="translate(20 256)" d="M3.1 2.1H10.9V3.8Q8.6 3.8 8.5 5.7V8.1Q8.6 10 10.9 10V11.8H3.1V10Q5.4 10 5.5 8.1V5.7Q5.4 3.8 3.1 3.8Z" fill="#000" stroke="#000" stroke-width="0.2" stroke-linejoin="round" shape-rendering="auto"/><path transform="translate(20 272)" d="M3.1 2.1H10.9V3.8Q8.6 3.8 8.5 5.7V8.1Q8.6 10 10.9 10V11.8H3.1V10Q5.4 10 5.5 8.1V5.7Q5.4 3.8 3.1 3.8Z" fill="#000" stroke="#000" stroke-width="0.2" stroke-linejoin="round" shape-rendering="auto"/><path transform="translate(20 288)" d="M3.1 2.1H10.9V3.8Q8.6 3.8 8.5 5.7V8.1Q8.6 10 10.9 10V11.8H3.1V10Q5.4 10 5.5 8.1V5.7Q5.4 3.8 3.1 3.8Z" fill="#000" stroke="#000" stroke-width="0.2" stroke-linejoin="round" shape-rendering="auto"/><path transform="translate(20 304)" d="M3.1 2.1H10.9V3.8Q8.6 3.8 8.5 5.7V8.1Q8.6 10 10.9 10V11.8H3.1V10Q5.4 10 5.5 8.1V5.7Q5.4 3.8 3.1 3.8Z" fill="#000" stroke="#000" stroke-width="0.2" stroke-linejoin="round" shape-rendering="auto"/><path transform="translate(20 320)" d="M3.1 2.1H10.9V3.8Q8.6 3.8 8.5 5.7V8.1Q8.6 10 10.9 10V11.8H3.1V10Q5.4 10 5.5 8.1V5.7Q5.4 3.8 3.1 3.8Z" fill="#000" stroke="#000" stroke-width="0.2" stroke-linejoin="round" shape-rendering="auto"/><path transform="translate(20 336)" d="M3.1 2.1H10.9V3.8Q8.6 3.8 8.5 5.7V8.1Q8.6 10 10.9 10V11.8H3.1V10Q5.4 10 5.5 8.1V5.7Q5.4 3.8 3.1 3.8Z" fill="#000" stroke="#000" stroke-width="0.2" stroke-linejoin="round" shape-rendering="auto"/></svg>
<div class="t" style="left:621.30px;top:84px;transform:scaleX(0.8453);color:#6d6d6d">Administration</div>
<div class="t" style="left:621.30px;top:100px;transform:scaleX(0.8586);color:#6d6d6d">Appointments</div>
<div class="t" style="left:621.30px;top:116px;transform:scaleX(0.8620);color:#6d6d6d">Billing and Collections</div>
<div class="t" style="left:621.30px;top:132px;transform:scaleX(0.8514);color:#6d6d6d">Central Clinic Only</div>
<div class="t" style="left:621.30px;top:148px;transform:scaleX(0.8031);color:#6d6d6d">Chart</div>
<div class="t" style="left:621.30px;top:164px;transform:scaleX(0.8686);color:#6d6d6d">Completed Procedures</div>
<div class="t" style="left:621.30px;top:180px;transform:scaleX(0.8501);color:#6d6d6d">Continuing Care</div>
<div class="t" style="left:621.30px;top:196px;transform:scaleX(0.8762);color:#6d6d6d">Document Center</div>
<div class="t" style="left:621.30px;top:212px;transform:scaleX(0.8753);color:#6d6d6d">Emergency Access</div>
<div class="t" style="left:621.30px;top:228px;transform:scaleX(0.8024);color:#6d6d6d">Family File</div>
<div class="t" style="left:621.34px;top:244px;transform:scaleX(0.8650);color:#6d6d6d">Insurance</div>
<div class="t" style="left:621.30px;top:260px;transform:scaleX(0.8751);color:#6d6d6d">Ledger</div>
<div class="t" style="left:621.30px;top:276px;transform:scaleX(0.8341);color:#6d6d6d">Letters</div>
<div class="t" style="left:621.30px;top:292px;transform:scaleX(0.8608);color:#6d6d6d">More Information</div>
<div class="t" style="left:621.30px;top:308px;transform:scaleX(0.8858);color:#6d6d6d">Office Journal</div>
<div class="t" style="left:621.30px;top:324px;transform:scaleX(0.8958);color:#6d6d6d">Office Manager</div>
<div class="t" style="left:621.30px;top:340px;transform:scaleX(0.8880);color:#6d6d6d">Practice/Clinic Setup</div>
<div class="t" style="left:621.30px;top:356px;transform:scaleX(0.8644);color:#6d6d6d">Prescriptions/Immunizations</div>
<div class="t" style="left:621.30px;top:372px;transform:scaleX(0.8609);color:#6d6d6d">Questionnaire</div>
<div class="t" style="left:621.30px;top:388px;transform:scaleX(0.8422);color:#6d6d6d">Referrals</div>
<div class="t" style="left:621.30px;top:404px;transform:scaleX(0.8677);color:#6d6d6d">Treatment Plans</div>
<div class="t" style="left:621.30px;top:420px;transform:scaleX(0.8811);color:#6d6d6d;clip-path:inset(-4px -4px 5px -4px)">Treatment Requests</div>
<div class="a" style="left:613px;top:451px;width:173px;height:24px;background:#f0f0f0;border-top:1px solid #fff;border-left:1px solid #fff;border-right:1px solid #696969;border-bottom:1px solid #696969;box-shadow:inset -1px -1px 0 #a0a0a0"></div>
<div class="t" style="left:625.40px;top:457px;transform:scaleX(0.9287)">Copy Rights From Other User</div>
<div class="a" style="left:613px;top:481px;width:173px;height:24px;background:#f0f0f0;border-top:1px solid #fff;border-left:1px solid #fff;border-right:1px solid #696969;border-bottom:1px solid #696969;box-shadow:inset -1px -1px 0 #a0a0a0"></div>
<div class="t" style="left:627.40px;top:487px;transform:scaleX(0.9453)">Copy Rights To Other Clinics</div>
<div class="a" style="left:613px;top:511px;width:173px;height:24px;background:#f0f0f0;border-top:1px solid #fff;border-left:1px solid #fff;border-right:1px solid #696969;border-bottom:1px solid #696969;box-shadow:inset -1px -1px 0 #a0a0a0"></div>
<div class="t" style="left:629.40px;top:517px;transform:scaleX(0.9372)">Copy Rights To Other Users</div>
<div class="a" style="left:613px;top:541px;width:173px;height:24px;background:#f0f0f0;border-top:1px solid #fff;border-left:1px solid #fff;border-right:1px solid #696969;border-bottom:1px solid #696969;box-shadow:inset -1px -1px 0 #a0a0a0"></div>
<div class="t" style="left:644.00px;top:547px;transform:scaleX(0.9419)">Copy Rights To Group</div>
</body></html>
